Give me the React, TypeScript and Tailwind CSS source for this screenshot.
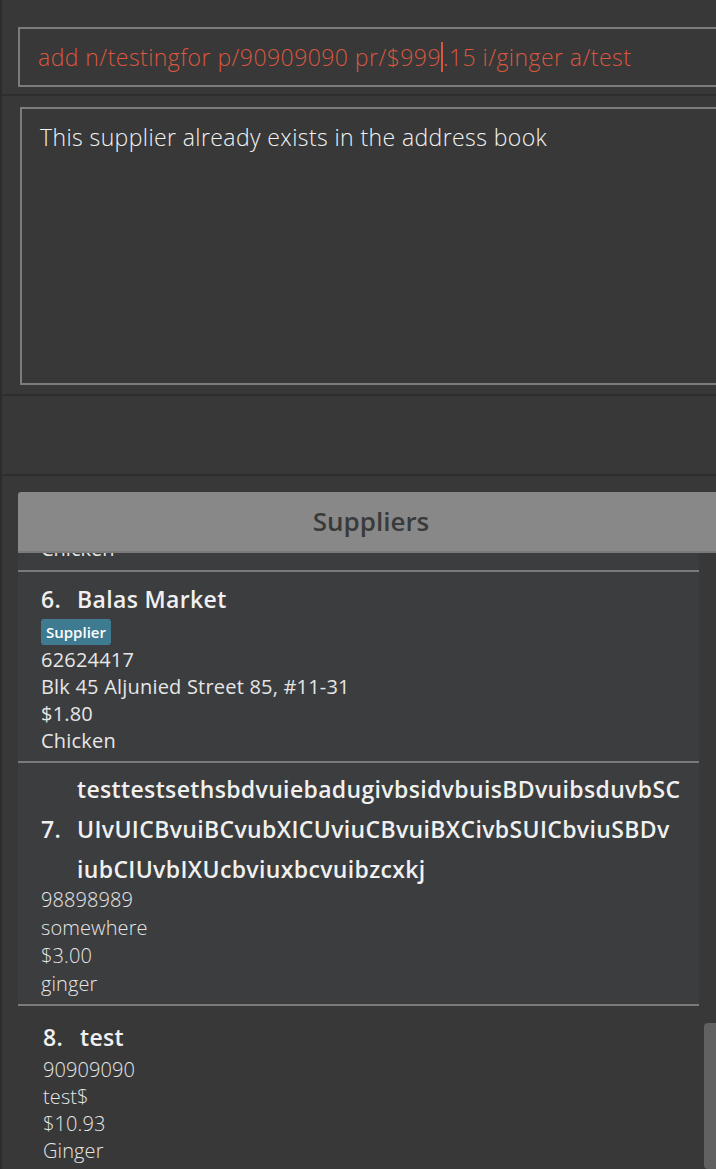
const font = { fontFamily: '"Open Sans", "Noto Sans", sans-serif' };

type Supplier = {
  idx: number;
  name: string[];
  tag?: string;
  phone: string;
  address: string;
  price: string;
  item: string;
};

const suppliers: Supplier[] = [
  {
    idx: 6,
    name: ['Balas Market'],
    tag: 'Supplier',
    phone: '62624417',
    address: 'Blk 45 Aljunied Street 85, #11-31',
    price: '$1.80',
    item: 'Chicken',
  },
  {
    idx: 7,
    name: [
      'testtestsethsbdvuiebadugivbsidvbuisBDvuibsduvbSC',
      'UIvUICBvuiBCvubXICUviuCBvuiBXCivbSUICbviuSBDv',
      'iubCIUvbIXUcbviuxbcvuibzcxkj',
    ],
    phone: '98898989',
    address: 'somewhere',
    price: '$3.00',
    item: 'ginger',
  },
];

function SupplierCard({ s }: { s: Supplier }) {
  const multi = s.name.length > 1;
  return (
    <div
      className={
        'bg-[#3c3d3f] border-b-2 border-[#7a7a7a] pl-[23px] text-[#e6e6e6] ' +
        (multi ? 'pt-[6px] pb-[6px]' : 'pt-[12px] pb-[7px]')
      }
    >
      <div
        className={
          'flex items-center font-semibold text-[23px] tracking-[0.35px] text-[#f0f0f0] ' +
          (multi ? 'leading-[40px]' : 'leading-[30px]')
        }
      >
        <span className="w-[36px] shrink-0">{s.idx}.</span>
        <div className="flex flex-col">
          {s.name.map((line, i) => (
            <span key={i}>{line}</span>
          ))}
        </div>
      </div>
      {s.tag && (
        <div className="flex mt-[5px]">
          <span className="bg-[#3e7b91] text-white text-[15px] font-semibold rounded-[3px] px-[5px] leading-[26px]">
            {s.tag}
          </span>
        </div>
      )}
      {multi ? (
        <div className="text-[20px] leading-[28px] font-light tracking-[0.1px] -mt-[3px]">
          <div>{s.phone}</div>
          <div>{s.address}</div>
          <div>{s.price}</div>
          <div>{s.item}</div>
        </div>
      ) : (
        <div className="text-[20px] leading-[27px] tracking-[0.2px] mt-[1px]">
          <div>{s.phone}</div>
          <div>{s.address}</div>
          <div>{s.price}</div>
          <div>{s.item}</div>
        </div>
      )}
    </div>
  );
}

export default function App() {
  return (
    <div
      className="w-[716px] h-[1169px] bg-[#383838] border-l-2 border-[#2c2c2c] overflow-hidden flex flex-col"
      style={font}
    >
      {/* command box */}
      <div className="h-[96px] shrink-0 border-b-2 border-[#2e2e2e] pl-[16px] pt-[27px]">
        <div className="w-[720px] h-[60px] border-2 border-[#7c7c7c] flex items-center pl-[18px] text-[23px] font-light text-[#d9573f] tracking-[0.45px]">
          <span>add n/testingfor p/90909090 pr/$999</span>
          <span className="inline-block w-[2px] h-[30px] bg-[#d9573f]" />
          <span>.15 i/ginger a/test</span>
        </div>
      </div>

      {/* result box */}
      <div className="h-[300px] shrink-0 border-b-2 border-[#2e2e2e] pl-[18px] pt-[11px]">
        <div className="w-[720px] h-[278px] border-2 border-[#7c7c7c] pl-[18px] pt-[11px] text-[23px] font-light text-[#f2f2f2] tracking-[0.4px]">
          This supplier already exists in the address book
        </div>
      </div>

      <div className="h-[78px] shrink-0" />

      {/* list panel */}
      <div className="flex-1 border-t-2 border-[#2e2e2e] pl-[16px] pt-[16px] flex flex-col overflow-hidden">
        <div className="w-[720px] h-[61px] shrink-0 bg-[#888888] rounded-t-[3px] border-b-2 border-[#7a7a7a] flex items-center justify-center pr-[14px]">
          <span className="text-[26px] font-semibold text-[#3a3a3a]">Suppliers</span>
        </div>
        <div className="flex flex-1 overflow-hidden">
          <div className="w-[681px] flex flex-col">
            <div className="bg-[#3c3d3f] h-[19px] overflow-hidden border-b-2 border-[#7a7a7a] pl-[23px]">
              <div className="-mt-[18px] text-[20px] leading-[27px] text-[#e6e6e6]">Chicken</div>
            </div>
            {suppliers.map((s) => (
              <SupplierCard key={s.idx} s={s} />
            ))}
            <div className="bg-[#383838] pl-[25px] pt-[16px] text-[#e6e6e6]">
              <div className="flex items-center font-semibold text-[23px] tracking-[0.35px] leading-[30px] text-[#f0f0f0]">
                <span className="w-[37px] shrink-0">8.</span>
                <span>test</span>
              </div>
              <div className="text-[20px] leading-[27px] font-light tracking-[0.1px] mt-[4px]">
                <div>90909090</div>
                <div>test$</div>
                <div>$10.93</div>
                <div>Ginger</div>
              </div>
            </div>
          </div>
          <div className="flex-1 flex flex-col pl-[5px]">
            <div className="h-[470px] shrink-0" />
            <div className="flex-1 bg-[#616161] rounded-l-[4px]" />
          </div>
        </div>
      </div>
    </div>
  );
}
